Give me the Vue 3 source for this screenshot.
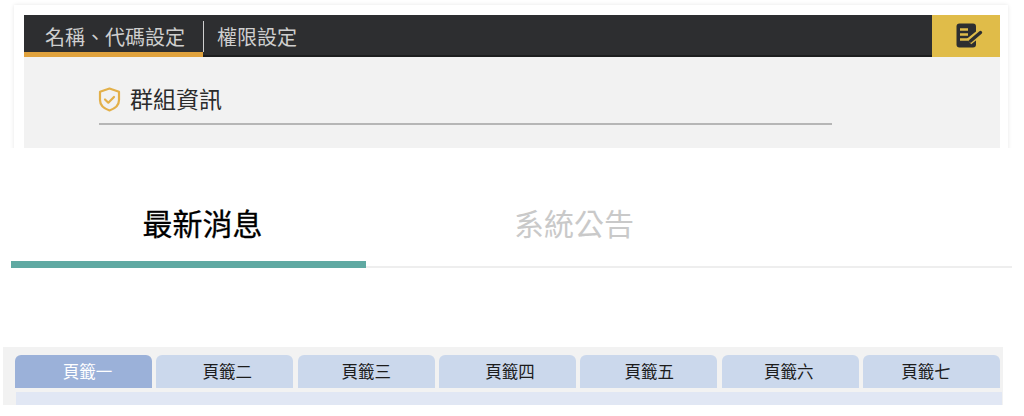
<template>
  <div class="page">
    <section class="top">
      <div class="card">
        <div class="bar">
          <div class="bar-tab active">名稱、代碼設定</div>
          <div class="bar-tab second">權限設定</div>
          <div class="edit-btn">
            <svg width="28" height="26" viewBox="0 0 28 26">
              <rect x="0.500" y="0.500" width="19.500" height="24" rx="3" fill="#2d2e30" />
              <path d="M4 6.500h8M4 11.500h8M4 16.500h8" stroke="#e0bc49" stroke-width="2.600" />
              <path d="M13 18.500l12-9.500" stroke="#e0bc49" stroke-width="7" />
              <path d="M20 3h6v14h-6z" fill="#e0bc49" />
              <path d="M14.500 18l10-8.500" stroke="#2d2e30" stroke-width="3.400" stroke-linecap="round" />
            </svg>
          </div>
        </div>
        <div class="group">
          <div class="group-title">
            <svg width="23" height="25" viewBox="0 0 23 25" fill="none">
              <path d="M11.500 1.500l9.500 3.200v8.300c0 5-4 8.600-9.500 10.500c-5.500-1.900-9.500-5.500-9.500-10.500v-8.300z" stroke="#e3b049" stroke-width="2.200" stroke-linejoin="round" />
              <path d="M7 12.500l3.300 3.200l5.700-5.700" stroke="#e3b049" stroke-width="2.200" stroke-linecap="round" stroke-linejoin="round" />
            </svg>
            <span>群組資訊</span>
          </div>
          <div class="group-line"></div>
        </div>
      </div>
    </section>

    <section class="news">
      <div class="news-tab active">最新消息</div>
      <div class="news-tab">系統公告</div>
    </section>

    <section class="tabs-wrap">
      <div class="tabs">
        <div
          v-for="(tab, i) in tabs"
          :key="tab.label"
          class="tab"
          :class="{ active: i === 0 }"
          :style="{ textIndent: tab.indent + 'px' }"
        >{{ tab.label }}</div>
      </div>
      <div class="tab-body"></div>
    </section>
  </div>
</template>

<script setup>
const tabs = [
  { label: '頁籤一', indent: 8 },
  { label: '頁籤二', indent: 5 },
  { label: '頁籤三', indent: 0 },
  { label: '頁籤四', indent: 5 },
  { label: '頁籤五', indent: 1 },
  { label: '頁籤六', indent: -3 },
  { label: '頁籤七', indent: -11 }
]
</script>

<style>
html, body {
  margin: 0;
  background: #fff;
}
</style>

<style scoped>
.page {
  width: 1024px;
  height: 416px;
  overflow: hidden;
  background: #fff;
  font-family: "Noto Sans CJK TC", "Noto Sans", sans-serif;
}
.top {
  height: 148px;
  padding: 5px 16px 0 14px;
  box-sizing: border-box;
  overflow: hidden;
}
.card {
  height: 160px;
  padding: 10px 8px 0 10px;
  box-sizing: border-box;
  background: #fff;
  box-shadow: 0 0 4px rgba(0, 0, 0, 0.1);
}
.bar {
  display: flex;
  height: 42px;
  background: #2d2e30;
  box-shadow: inset 0 -2px #1d1e1f;
  color: #cfcfcf;
  font-size: 20px;
}
.bar-tab {
  display: flex;
  align-items: center;
}
.bar-tab.active {
  width: 179px;
  height: 42px;
  padding: 5px 0 0 21px;
  box-sizing: border-box;
  border-bottom: 5px solid #e0a23d;
  white-space: nowrap;
}
.bar-tab.second {
  height: 31px;
  margin-top: 6px;
  padding-left: 13px;
  border-left: 1px solid #cfcfcf;
}
.edit-btn {
  margin-left: auto;
  width: 68px;
  display: flex;
  align-items: center;
  justify-content: center;
  background: #e0bc49;
  padding-left: 8px;
  box-sizing: border-box;
}
.group {
  height: 110px;
  padding: 30px 168px 0 74px;
  box-sizing: border-box;
  background: #f2f2f2;
}
.group-title {
  display: flex;
  align-items: center;
  gap: 9px;
  height: 25px;
  font-size: 23px;
  color: #2b2b2b;
}
.group-title span {
  margin-bottom: 4px;
}
.group-line {
  height: 2px;
  margin-top: 11px;
  margin-left: 1px;
  background: #b6b6b6;
}
.news {
  display: flex;
  height: 120px;
  margin: 0 12px 0 11px;
  box-sizing: border-box;
  border-bottom: 2px solid #eeeeee;
}
.news-tab {
  width: 416px;
  height: 120px;
  padding-top: 52px;
  box-sizing: border-box;
  text-align: center;
  font-size: 30px;
  line-height: 44px;
  color: #c9c9c9;
}
.news-tab.active {
  width: 355px;
  padding-left: 28px;
  color: #000;
  -webkit-text-stroke: 0.3px #000;
  border-bottom: 7px solid #5fa9a2;
}
.tabs-wrap {
  width: 1000px;
  height: 58px;
  margin: 79px 0 0 3px;
  padding: 8px 0 0 12px;
  box-sizing: border-box;
  background: #f2f2f2;
}
.tabs {
  display: flex;
  gap: 4.330px;
  width: 985px;
}
.tab {
  flex: 1;
  height: 33px;
  line-height: 33px;
  text-align: center;
  font-size: 16.500px;
  color: #1c1c1c;
  background: #cbd8ec;
  border-radius: 6px 6px 0 0;
}
.tab.active {
  background: #9bb1d9;
  color: #fff;
}
.tab-body {
  height: 13px;
  margin: 4px 1px 0 1px;
  background: #e1e7f4;
}
</style>
